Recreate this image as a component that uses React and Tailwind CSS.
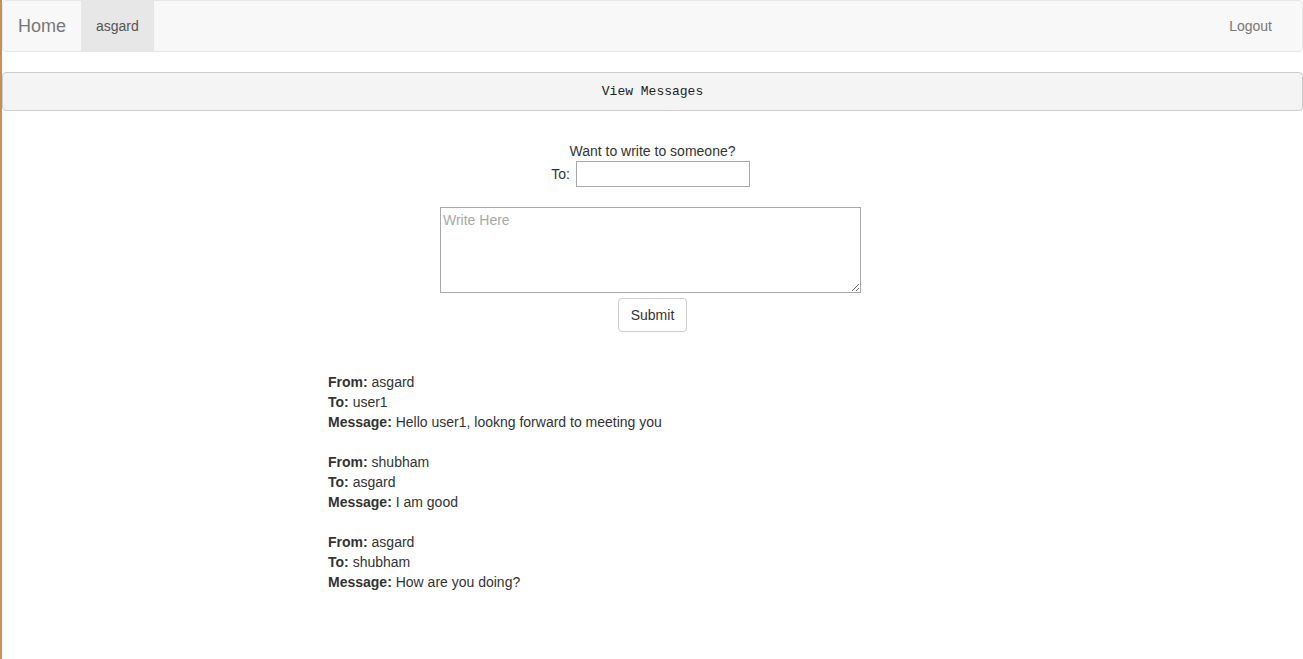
import React from 'react'

const messages = [
  { from: 'asgard', to: 'user1', text: 'Hello user1, lookng forward to meeting you' },
  { from: 'shubham', to: 'asgard', text: 'I am good' },
  { from: 'asgard', to: 'shubham', text: 'How are you doing?' },
]

export default function App() {
  return (
    <div className="flex min-h-[659px] bg-white text-[14px] leading-[20px] text-[#333] font-['Liberation_Sans',Arial,sans-serif]">
      {/* window edge */}
      <div className="w-[2px] bg-[#c1915c] shrink-0" />

      <div className="flex-1 flex flex-col">
        {/* Navbar */}
        <nav className="h-[52px] flex items-stretch bg-[#f8f8f8] border border-[#e7e7e7] rounded-[4px]">
          <a className="px-[15px] flex items-center text-[18px] text-[#777]">Home</a>
          <a className="px-[15px] flex items-center bg-[#e7e7e7] text-[#555]">asgard</a>
          <div className="flex-1" />
          <a className="pr-[30px] pl-[15px] flex items-center text-[#777]">Logout</a>
        </nav>

        {/* View Messages */}
        <button className="mt-[20px] h-[39px] bg-[#f4f4f4] border border-[#ccc] rounded-[4px] font-['Liberation_Mono',monospace] text-[13px] text-[#222]">
          View Messages
        </button>

        {/* Compose */}
        <div className="mt-[30px] flex flex-col items-center">
          <div>Want to write to someone?</div>
          <div className="flex items-center gap-[6px] mr-[4px]">
            <span>To:</span>
            <input className="w-[174px] h-[26px] border border-[#a9a9a9] outline-none px-[2px]" />
          </div>
          <textarea
            placeholder="Write Here"
            className="mt-[20px] mr-[4px] w-[421px] h-[86px] border border-[#a9a9a9] px-[2px] py-[2px] placeholder:text-[#a9a9a9] outline-none"
          />
          <button className="mt-[5px] w-[69px] h-[34px] border border-[#ccc] rounded-[4px] bg-white text-[#333]">
            Submit
          </button>
        </div>

        {/* Messages */}
        <div className="mt-[40px] ml-[326px]">
          {messages.map((m, i) => (
            <div key={i} className="mb-[20px]">
              <div><b>From:</b> {m.from}</div>
              <div><b>To:</b> {m.to}</div>
              <div><b>Message:</b> {m.text}</div>
            </div>
          ))}
        </div>
      </div>
    </div>
  )
}
